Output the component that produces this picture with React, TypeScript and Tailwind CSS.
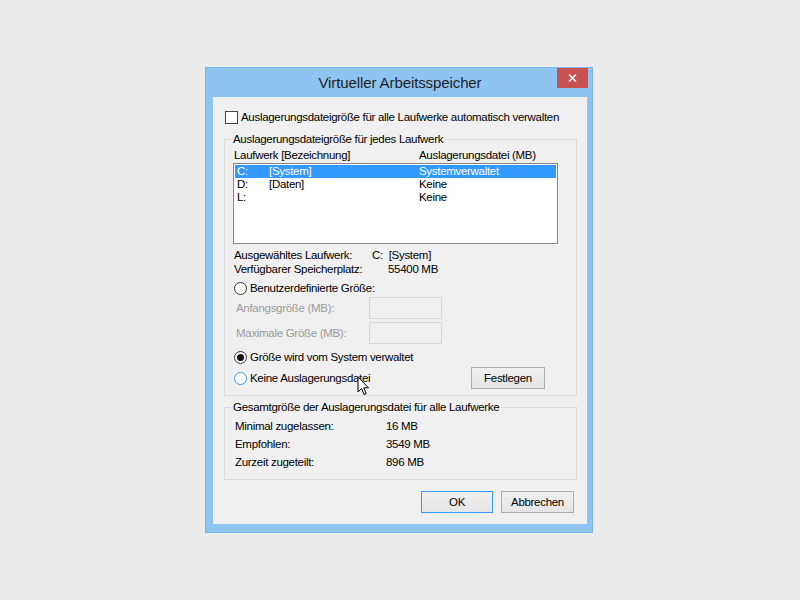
import React from 'react';

const font = { fontFamily: '"Liberation Sans", Arial, sans-serif' };

function Checkbox() {
  return <span className="block h-[13px] w-[13px] shrink-0 border border-[#444444] bg-white" />;
}

function Radio({ checked = false, hover = false }: { checked?: boolean; hover?: boolean }) {
  return (
    <span
      className={
        'flex h-[13px] w-[13px] shrink-0 items-center justify-center rounded-full border bg-white ' +
        (hover ? 'border-[#3399ff]' : 'border-[#333333]')
      }
    >
      {checked && <span className="block h-[7px] w-[7px] rounded-full bg-[#111111]" />}
    </span>
  );
}

function Button({ label, primary = false, width }: { label: string; primary?: boolean; width: string }) {
  return (
    <button
      type="button"
      className={
        'flex h-[22px] items-center justify-center border bg-gradient-to-b from-[#f0f0f0] to-[#e5e5e5] text-black ' +
        width +
        ' ' +
        (primary ? 'border-[#3399ff]' : 'border-[#acacac]')
      }
    >
      {label}
    </button>
  );
}

const drives = [
  { letter: 'C:', name: '[System]', size: 'Systemverwaltet', selected: true },
  { letter: 'D:', name: '[Daten]', size: 'Keine', selected: false },
  { letter: 'L:', name: '', size: 'Keine', selected: false },
];

const totals = [
  { label: 'Minimal zugelassen:', value: '16 MB' },
  { label: 'Empfohlen:', value: '3549 MB' },
  { label: 'Zurzeit zugeteilt:', value: '896 MB' },
];

export default function App() {
  return (
    <div className="relative h-[600px] w-[800px] overflow-hidden bg-[#ebebeb] pl-[205px] pt-[67px]" style={font}>
      {/* window frame */}
      <div className="relative w-[388px] border border-[#7fb4e4] bg-[#8dc4f2] pb-[8px] pl-[7px] pr-[5px]">
        <div className="flex h-[29px] items-center justify-center pt-[1px] text-[15px] tracking-[-0.1px] text-[#1e1e1e]">
          Virtueller Arbeitsspeicher
        </div>
        <div className="absolute right-[4px] top-0 flex h-[20px] w-[31px] items-center justify-center bg-[#c75050] text-white">
          <svg width="9" height="8" viewBox="0 0 9 8">
            <path d="M1 0.5 L8 7.5 M8 0.5 L1 7.5" stroke="white" strokeWidth="1.6" />
          </svg>
        </div>

        {/* client area */}
        <div className="flex h-[427px] w-[374px] flex-col bg-[#f0f0f0] text-[11.5px] leading-[13px] tracking-[-0.3px] text-black">
          <div className="ml-[12px] mt-[14px] flex h-[13px] items-center gap-[3px]">
            <Checkbox />
            <span className="whitespace-nowrap">Auslagerungsdateigröße für alle Laufwerke automatisch verwalten</span>
          </div>

          <fieldset className="ml-[11px] mt-[8px] w-[353px] border border-[#dcdcdc] pb-[6px]">
            <legend className="ml-[6px] px-[2px] leading-[14px]">Auslagerungsdateigröße für jedes Laufwerk</legend>
            <div className="mt-[2px] flex h-[14px] items-center pl-[9px]">
              <span className="w-[185px]">Laufwerk [Bezeichnung]</span>
              <span>Auslagerungsdatei (MB)</span>
            </div>
            <div className="ml-[8px] mt-[1px] h-[81px] w-[325px] border border-[#828790] bg-white p-[1px]">
              {drives.map((d) => (
                <div
                  key={d.letter}
                  className={
                    'flex h-[13px] items-center pl-[2px] ' + (d.selected ? 'bg-[#3399ff] text-white' : 'text-black')
                  }
                >
                  <span className="w-[32px]">{d.letter}</span>
                  <span className="w-[150px]">{d.name}</span>
                  <span>{d.size}</span>
                </div>
              ))}
            </div>

            <div className="mt-[4px] flex h-[14px] items-center pl-[9px]">
              <span className="w-[138px]">Ausgewähltes Laufwerk:</span>
              <span className="whitespace-pre">C:  [System]</span>
            </div>
            <div className="flex h-[14px] items-center pl-[9px]">
              <span className="w-[154px]">Verfügbarer Speicherplatz:</span>
              <span>55400 MB</span>
            </div>

            <div className="mt-[5px] flex h-[14px] items-center gap-[3px] pl-[9px]">
              <Radio />
              <span>Benutzerdefinierte Größe:</span>
            </div>
            <div className="mt-[2px] flex h-[22px] items-center pl-[11px] text-[#9a9a9a]">
              <span className="w-[133px]">Anfangsgröße (MB):</span>
              <span className="block h-[22px] w-[73px] border border-[#d9d9d9] bg-[#f0f0f0]" />
            </div>
            <div className="mt-[3px] flex h-[22px] items-center pl-[11px] text-[#9a9a9a]">
              <span className="w-[133px]">Maximale Größe (MB):</span>
              <span className="block h-[22px] w-[73px] border border-[#d9d9d9] bg-[#f0f0f0]" />
            </div>

            <div className="mt-[6px] flex h-[14px] items-center gap-[3px] pl-[9px]">
              <Radio checked />
              <span>Größe wird vom System verwaltet</span>
            </div>
            <div className="mt-[3px] flex h-[22px] items-center pl-[9px]">
              <div className="flex w-[237px] items-center gap-[3px]">
                <Radio hover />
                <span>Keine Auslagerungsdatei</span>
              </div>
              <Button label="Festlegen" width="w-[74px]" />
            </div>
          </fieldset>

          <fieldset className="ml-[11px] mt-[4px] w-[353px] border border-[#dcdcdc] pb-[8px]">
            <legend className="ml-[6px] px-[2px] leading-[14px]">
              Gesamtgröße der Auslagerungsdatei für alle Laufwerke
            </legend>
            <div className="mt-[3px]">
              {totals.map((t) => (
                <div key={t.label} className="flex h-[18px] items-center pl-[10px]">
                  <span className="w-[151px]">{t.label}</span>
                  <span>{t.value}</span>
                </div>
              ))}
            </div>
          </fieldset>

          <div className="mt-[11px] flex justify-end gap-[8px] pr-[13px]">
            <Button label="OK" primary width="w-[72px]" />
            <Button label="Abbrechen" width="w-[73px]" />
          </div>
        </div>
      </div>

      {/* mouse pointer */}
      <svg className="absolute left-[357px] top-[376px]" width="13" height="20" viewBox="0 0 13 20">
        <path
          d="M1 1 L1 16 L4.5 12.5 L7 18.5 L9.2 17.6 L6.8 11.8 L11.5 11.8 Z"
          fill="white"
          stroke="black"
          strokeWidth="1"
          strokeLinejoin="miter"
        />
      </svg>
    </div>
  );
}
